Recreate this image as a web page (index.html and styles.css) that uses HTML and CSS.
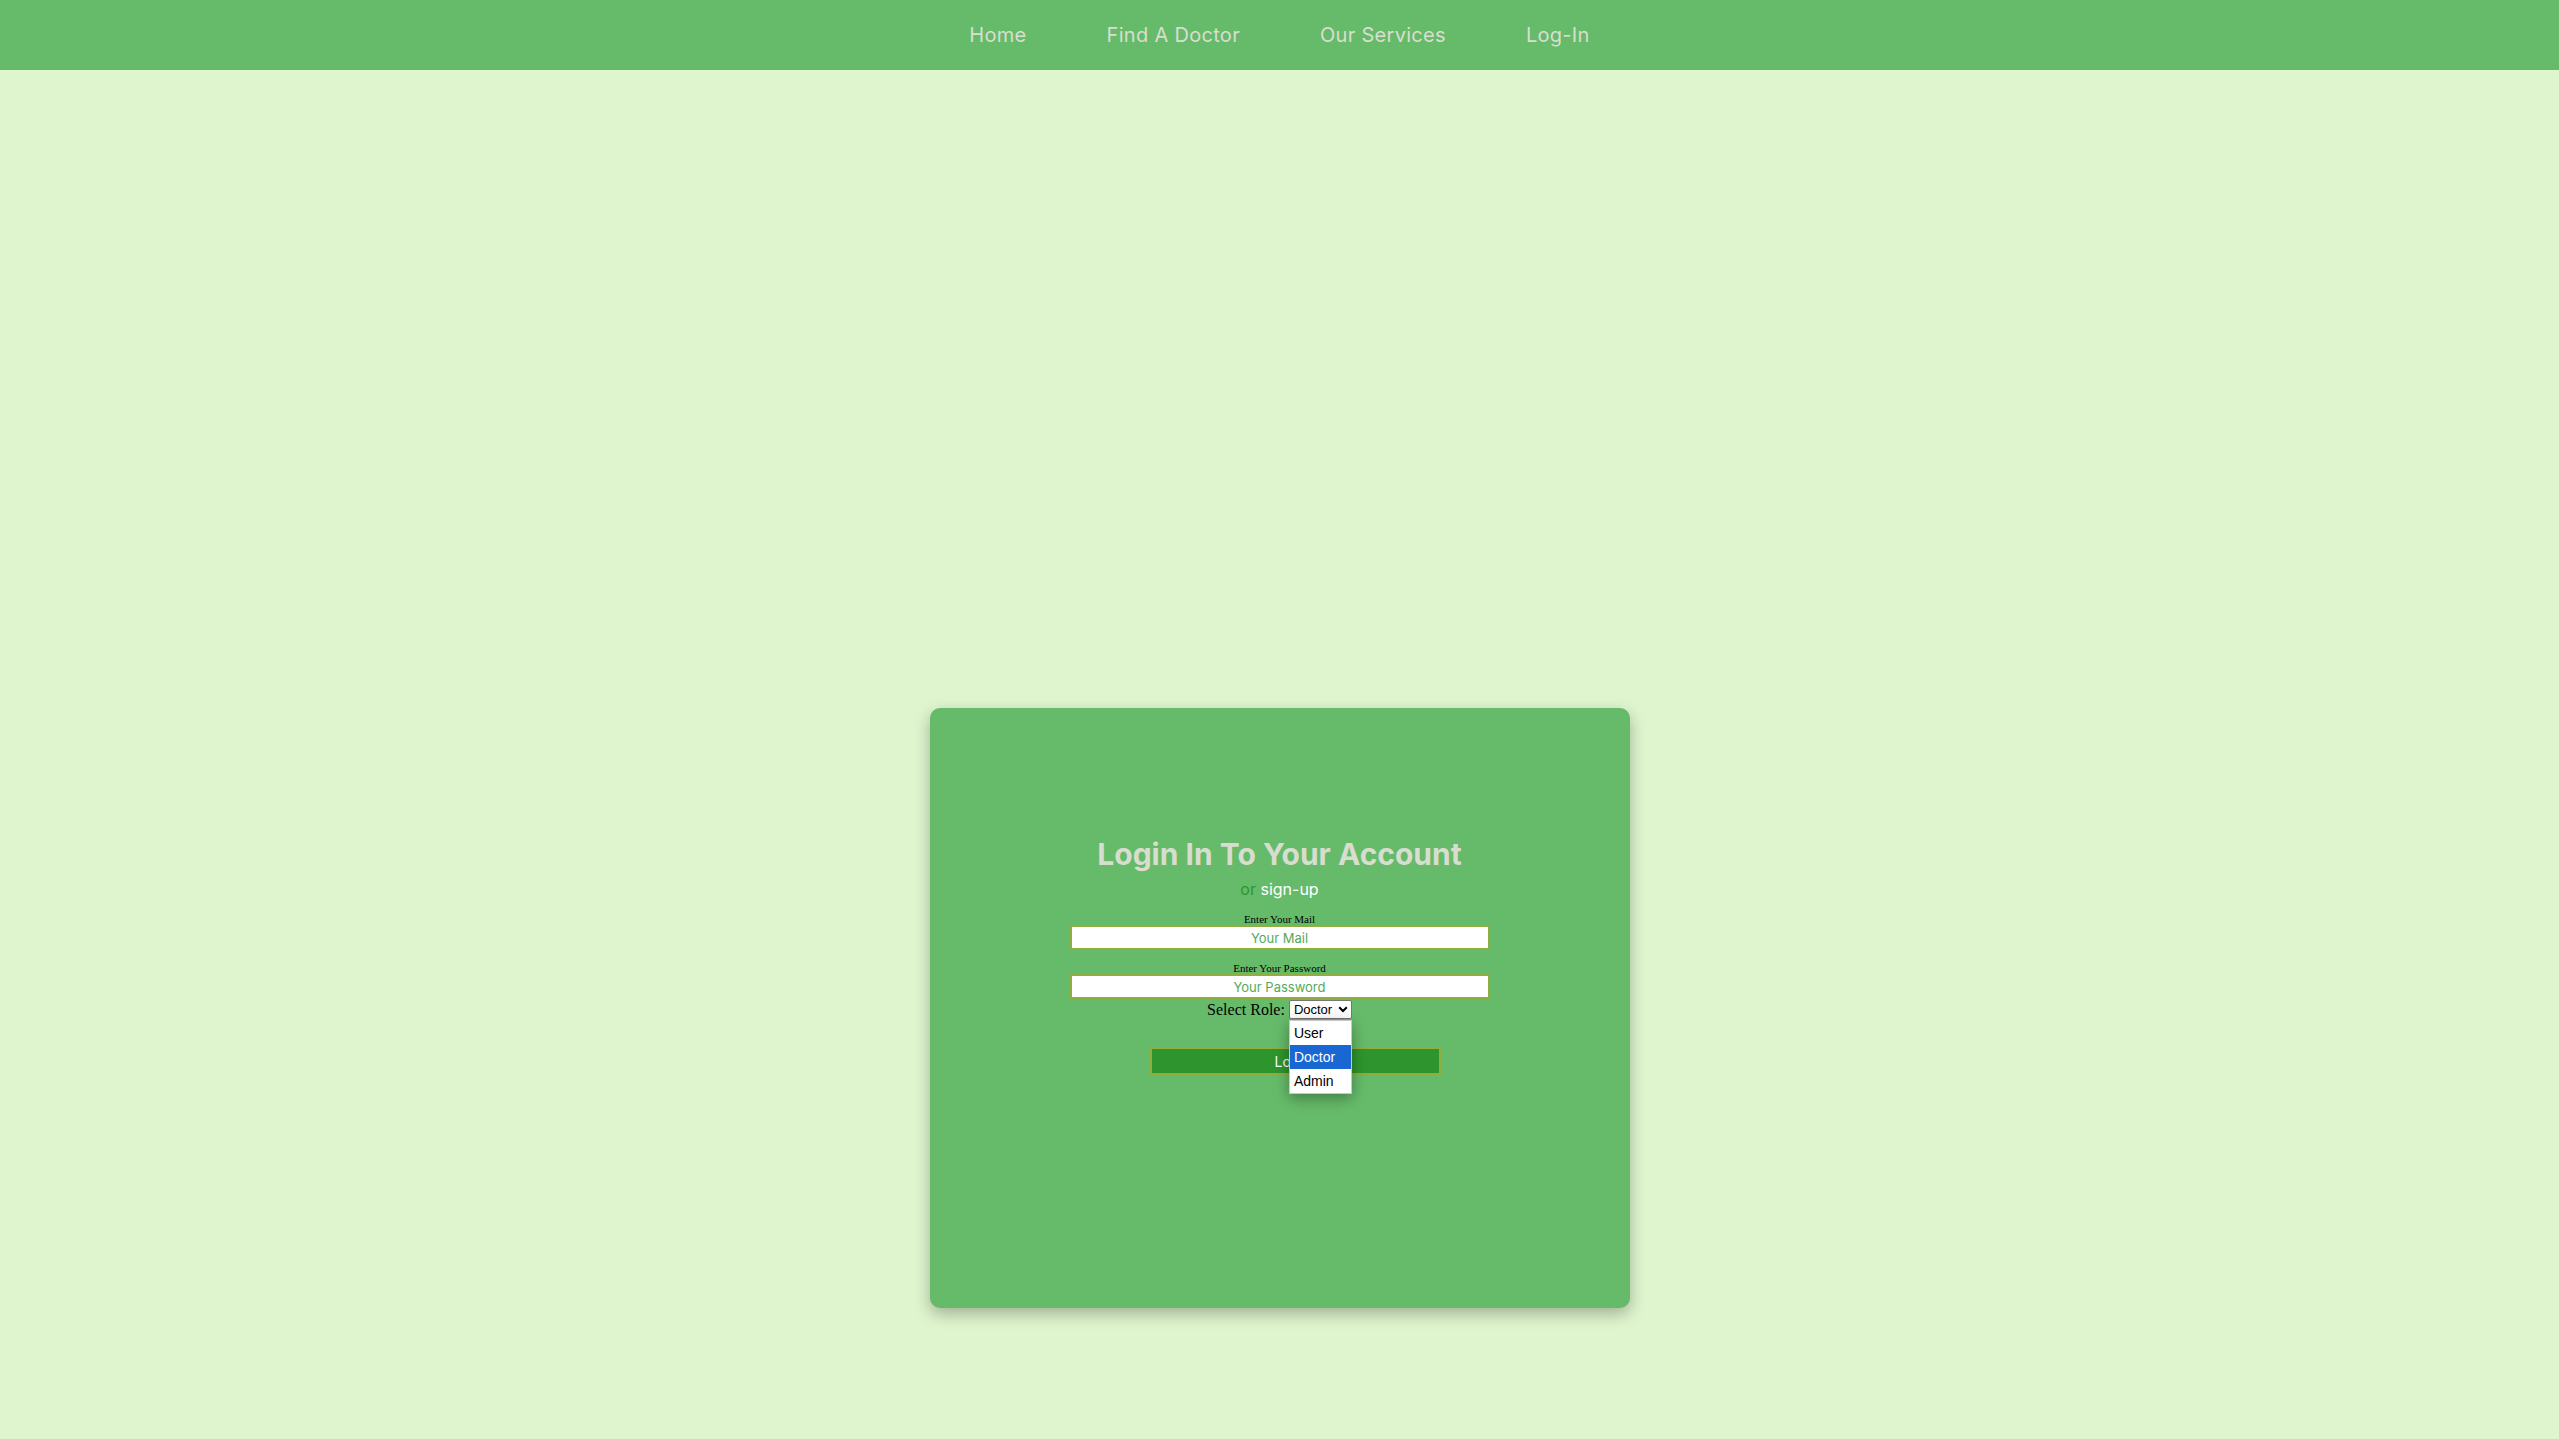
FILE: index.html
```html
<!DOCTYPE html>
<html lang="en">
<head>
<meta charset="utf-8">
<title>Login</title>
<link rel="stylesheet" href="styles.css">
</head>
<body>
<nav class="topnav">
  <ul class="nav-list">
    <li><a href="#" class="nav-link">Home</a></li>
    <li><a href="#" class="nav-link">Find A Doctor</a></li>
    <li><a href="#" class="nav-link">Our Services</a></li>
    <li><a href="#" class="nav-link">Log-In</a></li>
  </ul>
</nav>
<main class="page">
  <section class="card">
    <h1 class="title">Login In To Your Account</h1>
    <p class="alt"><span class="alt-or">or</span> <a href="#" class="alt-link">sign-up</a></p>
    <form class="form">
      <label class="field-label" for="mail">Enter Your Mail</label>
      <input class="field" id="mail" type="text" placeholder="Your Mail">
      <label class="field-label" for="pass">Enter Your Password</label>
      <input class="field" id="pass" type="password" placeholder="Your Password">
      <div class="role-row">
        <span class="role-label">Select Role:</span>
        <span class="select-wrap">
          <span class="select-box">Doctor<svg class="chev" width="10" height="7" viewBox="0 0 10 7"><path d="M1.2 1.2 L5 5 L8.8 1.2" fill="none" stroke="#000" stroke-width="2"/></svg></span>
          <span class="dropdown">
            <span class="opt">User</span>
            <span class="opt opt-sel">Doctor</span>
            <span class="opt">Admin</span>
          </span>
        </span>
      </div>
      <button type="button" class="submit">Log In</button>
    </form>
  </section>
</main>
</body>
</html>
```

FILE: styles.css
```css
html, body {
  margin: 0;
  padding: 0;
}
body {
  background: #dff5ce;
  font-family: "Inter", "Open Sans", sans-serif;
  min-height: 1439px;
}
.topnav {
  height: 70px;
  background: #66bb6a;
  display: flex;
  align-items: center;
  justify-content: center;
}
.nav-list {
  list-style: none;
  margin: 0;
  padding: 0;
  display: flex;
  gap: 80px;
}
.nav-link {
  color: #d9decf;
  text-decoration: none;
  font-size: 20px;
  font-weight: 400;
  letter-spacing: 0.3px;
}
.page {
  display: flex;
  justify-content: center;
  padding-top: 638px;
}
.card {
  box-sizing: border-box;
  width: 700px;
  height: 600px;
  background: #66bb6a;
  border-radius: 10px;
  box-shadow: 0 6px 16px rgba(0, 0, 0, 0.28);
  display: flex;
  flex-direction: column;
  align-items: center;
  padding-top: 128px;
}
.title {
  margin: 0;
  font-size: 30px;
  line-height: 36px;
  font-weight: 700;
  color: #d8ddd0;
  letter-spacing: 0;
}
.alt {
  margin: 6px 0 0;
  font-size: 16px;
  line-height: 22px;
}
.alt-or {
  color: #2e962e;
}
.alt-link {
  color: #ffffff;
  text-decoration: none;
}
.form {
  display: flex;
  flex-direction: column;
  align-items: center;
  margin-top: 13px;
}
.field-label {
  font-family: "Liberation Serif", serif;
  font-size: 11px;
  line-height: 12px;
  color: #000;
}
.field {
  box-sizing: border-box;
  width: 420px;
  height: 25px;
  border: 2px solid #8fae3e;
  background: #fff;
  text-align: center;
  font-family: "Inter", sans-serif;
  font-size: 13px;
  color: #4caf50;
  padding: 0;
  margin: 0 0 12px;
  outline: none;
}
.field:last-of-type {
  margin-bottom: 0;
}
.field::placeholder {
  color: #55a95a;
}
.role-row {
  display: flex;
  align-items: center;
  gap: 4px;
  margin-top: 1px;
  height: 19px;
}
.role-label {
  font-family: "Liberation Serif", serif;
  font-size: 16px;
  color: #000;
}
.select-wrap {
  position: relative;
  display: inline-block;
}
.select-box {
  box-sizing: border-box;
  display: flex;
  align-items: center;
  justify-content: space-between;
  width: 63px;
  height: 19px;
  padding: 0 3px 0 4px;
  background: #fff;
  border: 1px solid #767676;
  border-radius: 2px;
  font-family: "Liberation Sans", Arial, sans-serif;
  font-size: 13px;
  color: #000;
}
.chev {
  display: block;
}
.dropdown {
  position: absolute;
  top: 20px;
  left: 0;
  width: 63px;
  box-sizing: border-box;
  background: #fff;
  border: 1px solid #c8c8c8;
  box-shadow: 0 4px 14px rgba(0, 0, 0, 0.35);
  display: flex;
  flex-direction: column;
  z-index: 5;
}
.opt {
  display: block;
  height: 24px;
  line-height: 24px;
  padding-left: 4px;
  font-family: "Liberation Sans", Arial, sans-serif;
  font-size: 14px;
  color: #000;
}
.opt-sel {
  background: #1967d2;
  color: #fff;
}
.submit {
  box-sizing: border-box;
  width: 291px;
  height: 28px;
  margin-top: 28px;
  margin-left: 31px;
  background: #2e952e;
  border: 2px solid #8fae3e;
  color: #fff;
  font-family: "Inter", sans-serif;
  font-size: 14px;
  padding: 0;
}
```
